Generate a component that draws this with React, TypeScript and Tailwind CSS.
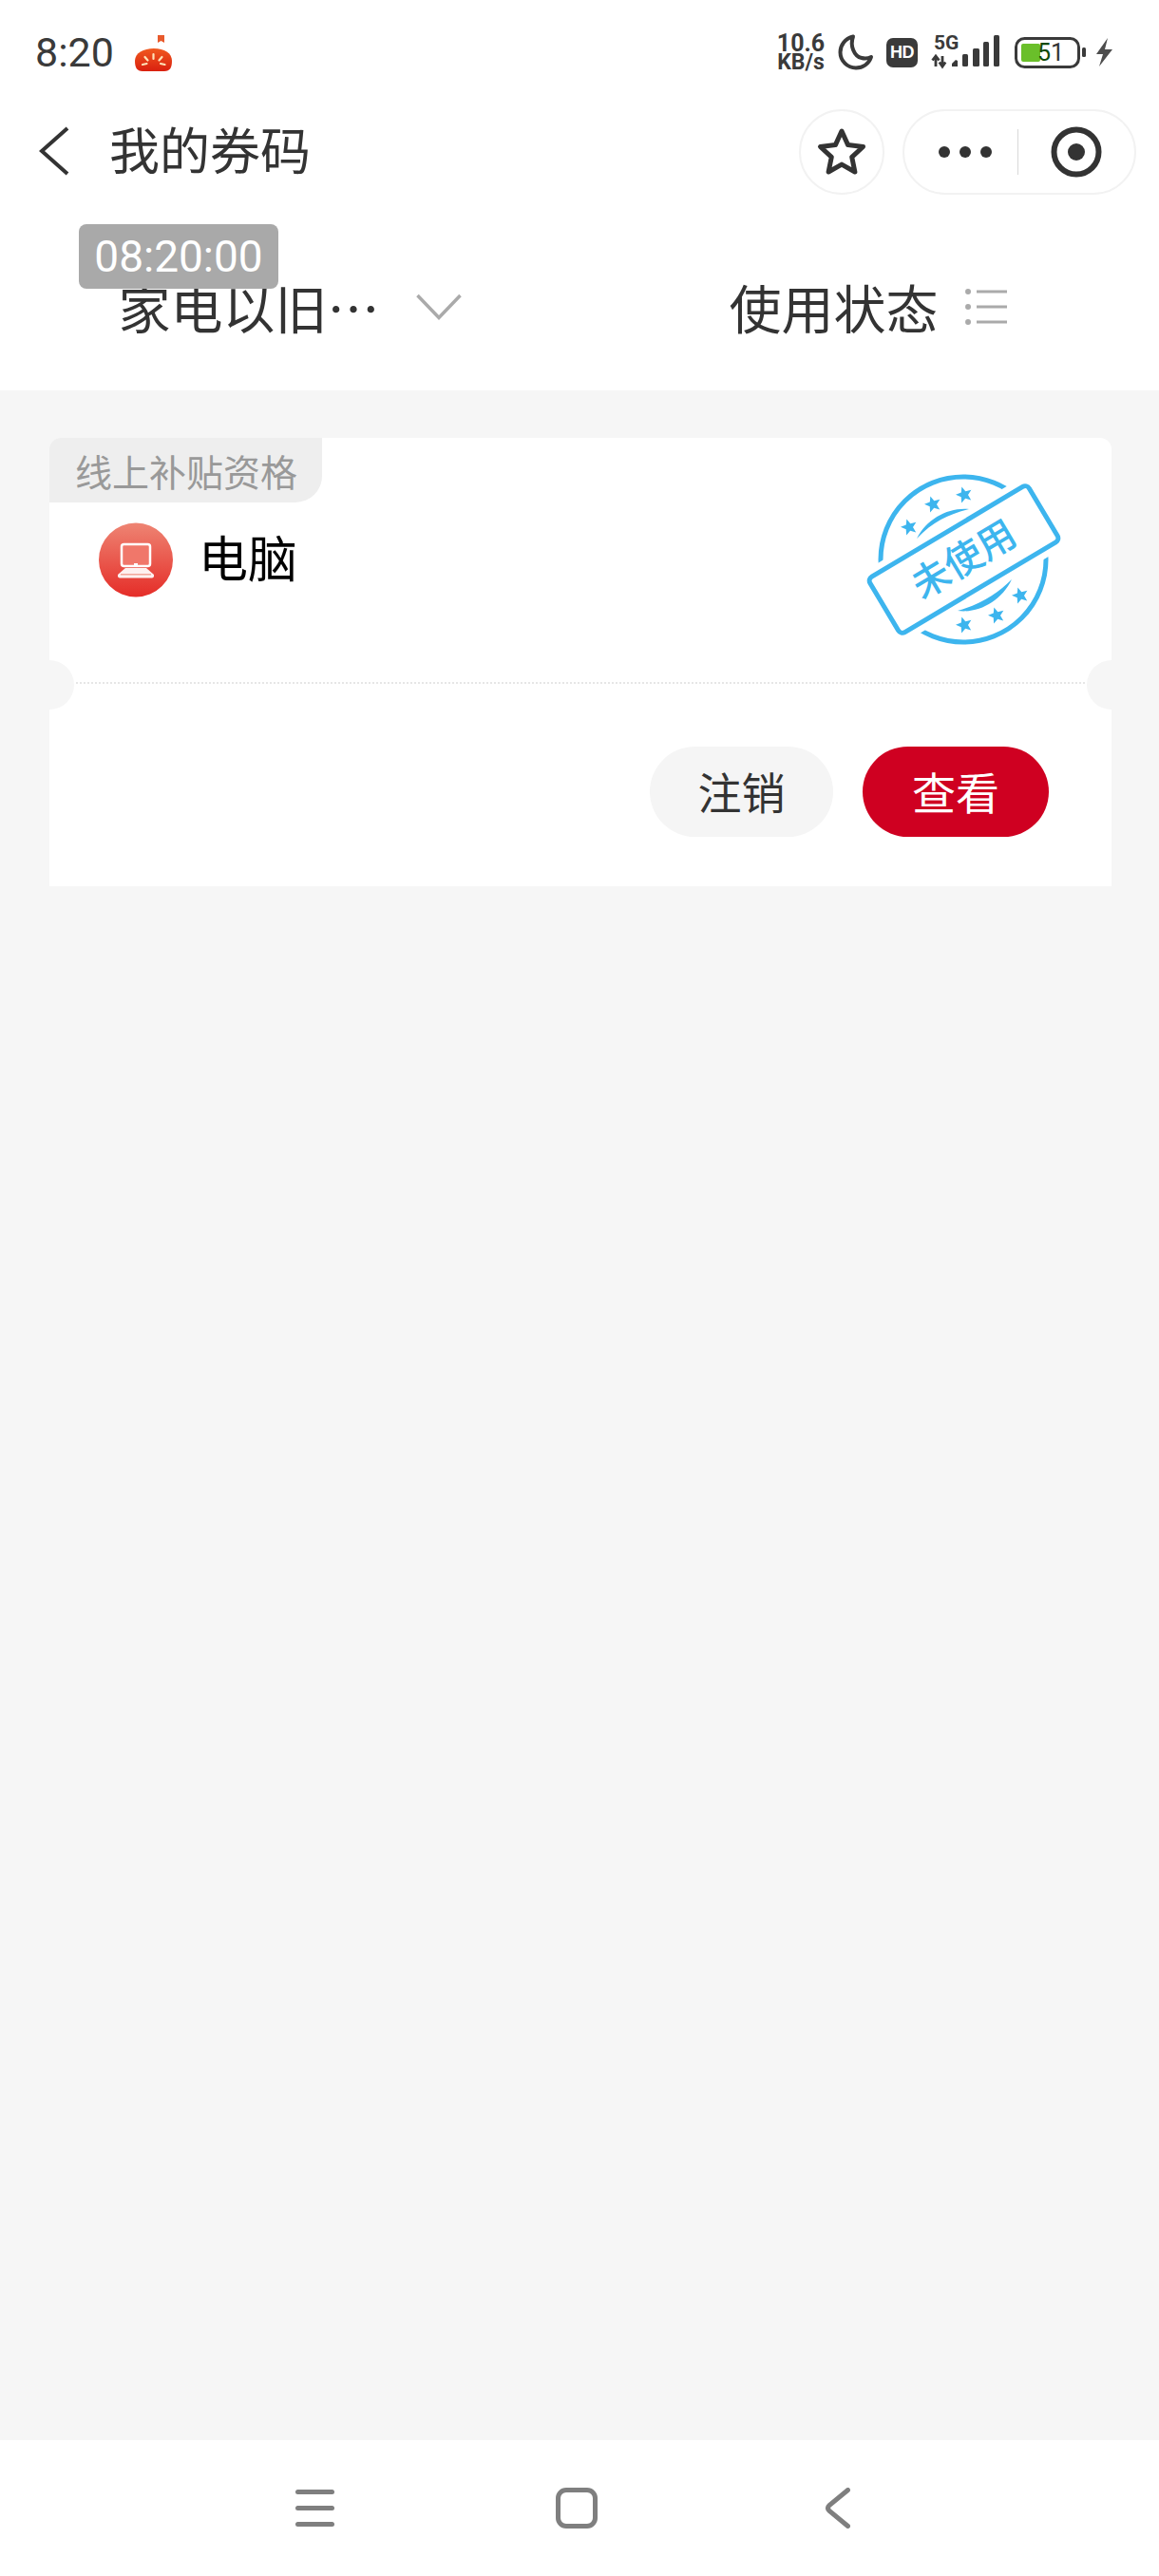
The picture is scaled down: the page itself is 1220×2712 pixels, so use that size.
const CJK = "font-['Noto_Sans_CJK_SC','Liberation_Sans',sans-serif]";

function StatusIcons() {
  return (
    <div className="flex items-center">
      <div className="w-[52px] font-['Roboto',sans-serif] font-bold text-[#3a3a3a] text-center">
        <div className="text-[25px] leading-[21px]">10.6</div>
        <div className="text-[23px] leading-[20px]">KB/s</div>
      </div>
      <svg width="38" height="38" viewBox="0 0 38 38" className="ml-[13px]" fill="none">
        <path d="M16 2.500C7.500 4.500 2.500 11.500 2.500 19c0 9 7.500 16.500 16.500 16.500 7.500 0 13.500-4.500 16-11.500-3 1.500-6.500 2-10 1C17 23.500 12.500 12 16 2.500z" stroke="#3a3a3a" strokeWidth="4" strokeLinejoin="round" />
      </svg>
      <div className="ml-[13px] w-[33px] h-[31px] rounded-[7px] bg-[#3a3a3a] flex items-center justify-center font-['Liberation_Sans',sans-serif] font-bold text-[18px] text-white tracking-[-0.5px]">HD</div>
      <svg width="72" height="42" viewBox="0 -6 72 42" className="ml-[14px] -mt-[6px]">
        <text x="3" y="15" fontFamily="Roboto, sans-serif" fontWeight="700" fontSize="21" fill="#3a3a3a">5G</text>
        <path d="M5 22v11M1.500 26.500L5 22l3.500 4.500M12 22v11M8.800 28.500L12 33l3.200-4.500" stroke="#3a3a3a" strokeWidth="2.800" fill="none" />
        <path d="M22 33v-3l4-4 2 1v6z" fill="#3a3a3a" />
        <rect x="33" y="20" width="6" height="13" rx="1.500" fill="#3a3a3a" />
        <rect x="44" y="14" width="7" height="19" rx="1.500" fill="#3a3a3a" />
        <rect x="55" y="7" width="6" height="26" rx="1.500" fill="#3a3a3a" />
        <rect x="66" y="0" width="6" height="33" rx="1.500" fill="#3a3a3a" />
      </svg>
      <svg width="75" height="33" viewBox="0 0 75 33" className="ml-[16px]">
        <rect x="1.500" y="1.500" width="66" height="30" rx="9" fill="none" stroke="#3a3a3a" strokeWidth="3" />
        <rect x="7" y="7" width="20" height="19" rx="2" fill="#6abf2a" />
        <text x="24" y="25" fontFamily="Roboto, sans-serif" fontSize="25" fill="#333">
          <tspan fill="#0f4a06">5</tspan>1
        </text>
        <rect x="71" y="11" width="4" height="10" rx="1.500" fill="#3a3a3a" />
      </svg>
      <svg width="20" height="30" viewBox="0 0 20 30" className="ml-[9px]">
        <path d="M14 0L2 17h7L5 30l14-18h-8z" fill="#4d4d4d" />
      </svg>
    </div>
  );
}

function Tomato() {
  return (
    <svg width="40" height="38" viewBox="0 0 40 38" className="ml-[22px] mt-[1px]">
      <defs>
        <linearGradient id="tom" x1="0" y1="0" x2="0" y2="1">
          <stop offset="0" stopColor="#f0591f" />
          <stop offset="1" stopColor="#d9200f" />
        </linearGradient>
      </defs>
      <path d="M24 0h7v8l-3.500-2L24 8z" fill="#e85a2c" />
      <path d="M0 27C0 19 9 14 20 14s19 5 19 13c0 7-2 11-8 11H8c-6 0-8-4-8-11z" fill="url(#tom)" />
      <path d="M19.500 20v5M10.500 23l3 3.500M28.500 23l-3 3.500M8 31l4.500-1M31.500 31l-4.500-1" stroke="#ffe3b8" strokeWidth="2.200" strokeLinecap="round" />
    </svg>
  );
}

function Star({ x, y }: { x: number; y: number }) {
  const pts = [0, 1, 2, 3, 4, 5, 6, 7, 8, 9]
    .map((i) => {
      const r = i % 2 === 0 ? 9 : 4;
      const a = (Math.PI / 5) * i - Math.PI / 2 - 0.3;
      return `${x + r * Math.cos(a)},${y + r * Math.sin(a)}`;
    })
    .join(" ");
  return <polygon points={pts} fill="#3db5ee" />;
}

function Stamp() {
  return (
    <svg width="210" height="180" viewBox="0 0 210 180" className="absolute left-[858px] top-[38px]">
      <circle cx="104" cy="90" r="87" fill="none" stroke="#3db5ee" strokeWidth="5" />
      <g transform="rotate(-30.8 104.500 90)">
        <rect x="2" y="47" width="205" height="86" fill="#fff" />
        <rect x="7" y="56" width="195" height="68" rx="5" fill="#fff" stroke="#3db5ee" strokeWidth="5" />
        <text x="104.500" y="104" textAnchor="middle" fontFamily="'Noto Sans CJK SC', sans-serif" fontWeight="500" fontSize="40" fill="#3db5ee">未使用</text>
      </g>
      <path d="M55 68C66 47 88 35 110 37 90 42 72 50 55 68z" fill="#3db5ee" />
      <path d="M98 144c22 3 46-10 57-33-14 14-32 26-57 33z" fill="#3db5ee" />
      <Star x={47} y={56} />
      <Star x={72} y={32} />
      <Star x={105} y={22} />
      <Star x={105} y={159} />
      <Star x={139} y={149} />
      <Star x={164} y={128} />
    </svg>
  );
}

function LaptopBadge() {
  return (
    <svg width="78" height="79" viewBox="0 0 78 79">
      <defs>
        <linearGradient id="pc" x1="0" y1="0" x2="0" y2="1">
          <stop offset="0" stopColor="#ee8473" />
          <stop offset="1" stopColor="#e52d28" />
        </linearGradient>
      </defs>
      <circle cx="39" cy="39.500" r="39" fill="url(#pc)" />
      <rect x="24" y="23" width="30" height="23" rx="2.500" fill="#f0776a" stroke="#fff" strokeWidth="2.500" />
      <rect x="37" y="43" width="4" height="2.500" fill="#fff" />
      <path d="M28 48h22l8 7v1.500c0 1-1 2-2 2H22c-1 0-2-1-2-2V55z" fill="#fff" fillOpacity="0.92" />
      <rect x="23" y="54" width="32" height="1.500" fill="#f2a79b" />
    </svg>
  );
}

export default function App() {
  return (
    <div className="relative w-full h-[2712px] flex flex-col bg-[#f6f6f6] font-['Roboto',sans-serif]">
      <header className="bg-white h-[411px] shrink-0 flex flex-col">
        <div className="h-[110px] flex items-center justify-between pl-[37px] pr-[48px]">
          <div className="flex items-center">
            <span className="text-[43px] leading-none text-[#3a3a3a]">8:20</span>
            <Tomato />
          </div>
          <StatusIcons />
        </div>

        <div className="h-[100px] flex items-center pl-[41px] pr-[24px]">
          <svg width="32" height="52" viewBox="0 0 32 52" fill="none" className="-mt-[2px]">
            <path d="M30 2L3 26l27 24" stroke="#333" strokeWidth="4" />
          </svg>
          <h1 className={`ml-[42px] text-[53px] leading-none text-[#333] font-normal -mt-[8px] ${CJK}`}>我的券码</h1>
          <div className="ml-auto flex items-center gap-[19px]">
            <div className="w-[90px] h-[90px] rounded-full border-2 border-[#f2f2f2] flex items-center justify-center">
              <svg width="54" height="54" viewBox="0 0 54 54" fill="none">
                <path d="M27 5l6.600 14.600 15.900 1.900-11.800 10.800 3.200 15.700L27 40.100 13.100 48l3.200-15.700L4.500 21.500l15.900-1.900z" stroke="#333" strokeWidth="5" strokeLinejoin="round" />
              </svg>
            </div>
            <div className="w-[246px] h-[90px] rounded-full border-2 border-[#f2f2f2] flex items-center">
              <div className="w-[119px] flex items-center justify-center gap-[10px] pl-[9px]">
                <span className="w-[12px] h-[12px] rounded-full bg-[#333]" />
                <span className="w-[12px] h-[12px] rounded-full bg-[#333]" />
                <span className="w-[12px] h-[12px] rounded-full bg-[#333]" />
              </div>
              <div className="w-[1px] h-[48px] bg-[#d9d9d9]" />
              <div className="flex-1 flex items-center justify-center">
                <svg width="54" height="54" viewBox="0 0 54 54" fill="none">
                  <circle cx="27" cy="27" r="23.500" stroke="#333" strokeWidth="6" />
                  <circle cx="27" cy="27" r="9" fill="#333" />
                </svg>
              </div>
            </div>
          </div>
        </div>

        <div className={`flex-1 flex items-center ${CJK}`}>
          <div className="flex-1 flex items-center justify-center pt-[26px]">
            <span className="text-[55px] leading-none text-[#333] -mt-[3px]">家电以旧…</span>
            <svg width="48" height="28" viewBox="0 0 48 28" fill="none" className="ml-[38px] -mt-[2px]">
              <path d="M1.500 2L24 25.500 46.500 2" stroke="#aaa" strokeWidth="3.500" />
            </svg>
          </div>
          <div className="flex-1 flex items-center justify-center pt-[26px]">
            <span className="text-[55px] leading-none text-[#333] -mt-[3px]">使用状态</span>
            <svg width="44" height="38" viewBox="0 0 44 38" className="ml-[28px] mr-[3px] -mt-[2px]">
              <circle cx="3" cy="3" r="3" fill="#aaa" />
              <circle cx="3" cy="19" r="3" fill="#aaa" />
              <circle cx="3" cy="35" r="3" fill="#aaa" />
              <path d="M12 3h32M12 19h32M12 35h32" stroke="#aaa" strokeWidth="3" />
            </svg>
          </div>
        </div>
      </header>

      {/* floating timer */}
      <div className="absolute left-[83px] top-[236px] w-[210px] h-[68px] rounded-[8px] bg-[#a9a9a9] flex items-center justify-center text-[46px] leading-none text-white">
        08:20:00
      </div>

      <main className="flex-1 px-[50px] pt-[50px]">
        <div className={`relative w-[1118px] ml-[2px] h-[472px] bg-white rounded-t-[12px] overflow-hidden ${CJK}`}>
          <div className="w-[287px] h-[68px] bg-[#eeeeee] rounded-br-[28px] pl-[27px] flex items-center text-[39px] leading-none text-[#999]">
            线上补贴资格
          </div>
          <div className="flex items-center pl-[52px] mt-[21px]">
            <LaptopBadge />
            <span className="ml-[27px] text-[52px] leading-none text-black -mt-[8px]">电脑</span>
          </div>
          <Stamp />
          <div className="absolute left-[-26px] top-[234px] w-[52px] h-[52px] rounded-full bg-[#f6f6f6]" />
          <div className="absolute right-[-26px] top-[234px] w-[52px] h-[52px] rounded-full bg-[#f6f6f6]" />
          <div className="absolute left-[28px] right-[28px] top-[257px] border-t-2 border-dotted border-[#e6e6e6]" />
          <div className="absolute right-[66px] bottom-[52px] flex items-center gap-[31px] text-[46px] leading-none">
            <button className="w-[193px] h-[95px] rounded-full bg-[#f5f5f5] text-[#333] pb-[3px]">注销</button>
            <button className="w-[196px] h-[95px] rounded-full bg-[#cf0021] text-white pb-[3px]">查看</button>
          </div>
        </div>
      </main>

      <nav className="h-[143px] shrink-0 bg-white flex items-center justify-center pr-[14px]">
        <div className="w-[41px] flex flex-col gap-[12px]">
          <span className="h-[5px] rounded-full bg-[#7f7f7f]" />
          <span className="h-[5px] rounded-full bg-[#7f7f7f]" />
          <span className="h-[5px] rounded-full bg-[#7f7f7f]" />
        </div>
        <div className="ml-[233px] w-[44px] h-[43px] rounded-[11px] border-[5px] border-[#7f7f7f]" />
        <svg width="27" height="43" viewBox="0 0 27 43" fill="none" className="ml-[239px]">
          <path d="M24.500 2.500L5 18.500c-2 2-2 4 0 6l19.500 16" stroke="#7f7f7f" strokeWidth="5" strokeLinecap="round" />
        </svg>
      </nav>
    </div>
  );
}
